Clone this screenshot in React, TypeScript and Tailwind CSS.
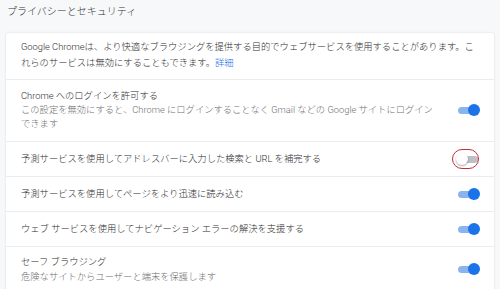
import React from 'react';

const font = { fontFamily: 'Roboto, "Noto Sans CJK JP", sans-serif' };

const Toggle: React.FC<{ on: boolean; marked?: boolean }> = ({ on, marked }) => (
  <div className="relative w-[24px] h-[14px] flex items-center shrink-0">
    <div className={`w-[20px] h-[7px] rounded-full ml-[2px] ${on ? 'bg-[#8ab4f0]' : 'bg-[#bdc1c6]'}`} />
    <div
      className={`absolute w-[12px] h-[12px] rounded-full top-[1px] ${
        on ? 'left-[12px] bg-[#1a73e8]' : 'left-[0px] bg-white shadow-[0_1px_2px_rgba(0,0,0,0.35)]'
      }`}
    />
    {marked && (
      <div className="absolute left-[-4px] top-[-3px] w-[27px] h-[20px] rounded-full border-[1.5px] border-[#c0303a]" />
    )}
  </div>
);

interface RowProps {
  title: string;
  sub?: string[];
  on: boolean;
  marked?: boolean;
  last?: boolean;
  pad?: string;
}

const Row: React.FC<RowProps> = ({ title, sub, on, marked, last, pad }) => (
  <div
    className={`flex items-center pl-[15px] pr-[14px] ${last ? '' : 'border-b border-[#ececec]'} ${
      sub ? pad : 'h-[35px]'
    }`}
  >
    <div className={`flex-1 text-[9.3px] font-light whitespace-nowrap ${last ? 'leading-[15px]' : 'leading-[14px]'}`}>
      <div className="text-[#2e2e2e]">{title}</div>
      {sub?.map((s, i) => (
        <div key={i} className="text-[#707070]">
          {s}
        </div>
      ))}
    </div>
    <Toggle on={on} marked={marked} />
  </div>
);

export default function App() {
  return (
    <div className="w-[500px] h-[289px] overflow-hidden bg-[#f7f8fa] pl-[6px] pr-[6px]" style={font}>
      <div className="h-[33px] pt-[4px] pl-[1px] text-[10px] font-light text-[#333] leading-[16px]">
        プライバシーとセキュリティ
      </div>
      <div className="bg-white rounded-[2px] shadow-[0_0_2px_rgba(0,0,0,0.15)]">
        <div className="px-[15px] pt-[6px] pb-[8px] border-b border-[#ececec] text-[9.3px] font-light leading-[16px] text-[#2e2e2e] whitespace-nowrap">
          <div>Google Chromeは、より快適なブラウジングを提供する目的でウェブサービスを使用することがあります。こ</div>
          <div>
            れらのサービスは無効にすることもできます。<span className="text-[#1a73e8]">詳細</span>
          </div>
        </div>
        <Row
          title="Chrome へのログインを許可する"
          sub={['この設定を無効にすると、Chrome にログインすることなく Gmail などの Google サイトにログイン', 'できます']}
          on
          pad="pt-[9px] pb-[10px]"
        />
        <Row title="予測サービスを使用してアドレスバーに入力した検索と URL を補完する" on={false} marked />
        <Row title="予測サービスを使用してページをより迅速に読み込む" on />
        <Row title="ウェブ サービスを使用してナビゲーション エラーの解決を支援する" on />
        <Row title="セーフ ブラウジング" sub={['危険なサイトからユーザーと端末を保護します']} on last pad="pt-[7px] pb-[8px]" />
      </div>
    </div>
  );
}
